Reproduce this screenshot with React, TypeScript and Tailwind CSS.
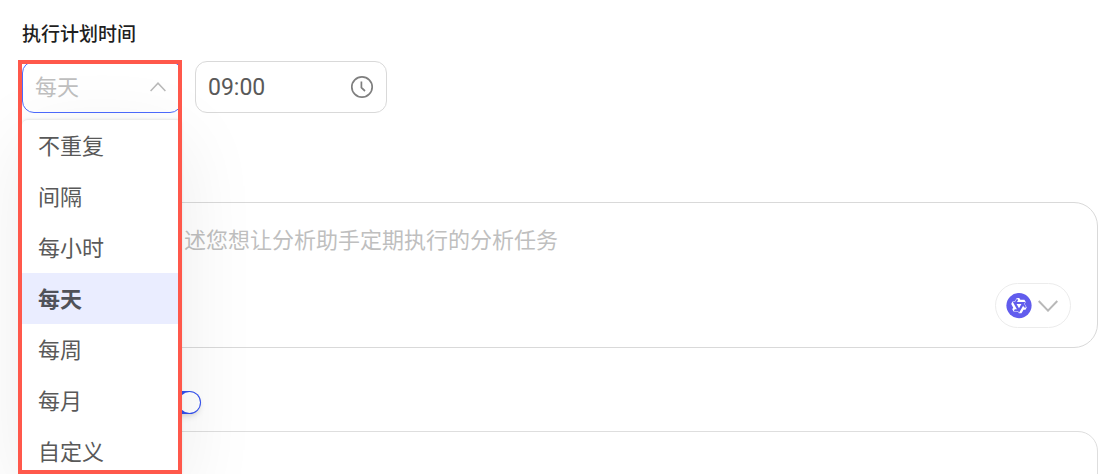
import { useState } from "react";

const repeatOptions = ["不重复", "间隔", "每小时", "每天", "每周", "每月", "自定义"];

function ClockIcon() {
  return (
    <svg className="size-6 shrink-0" viewBox="0 0 24 24" fill="none" stroke="#7f7f7f" strokeWidth="1.7" aria-hidden="true">
      <circle cx="12" cy="12" r="10.2" />
      <path d="M11.4 6.5v6.2l3.6 3.3" />
    </svg>
  );
}

function ModelIcon() {
  return (
    <svg className="size-[26px] shrink-0" viewBox="0 0 26 26" aria-hidden="true">
      <circle cx="13" cy="12.6" r="12.6" fill="#615ced" />
      <g transform="translate(4.6 4.2) scale(0.7)">
        <path
          fill="#fff"
          fillRule="evenodd"
          d="M12.604 1.34c.393.69.784 1.382 1.174 2.075a.18.18 0 00.157.091h5.552c.174 0 .322.11.446.327l1.454 2.57c.19.337.24.478.024.837-.26.43-.513.864-.76 1.3l-.367.658c-.106.196-.223.28-.04.512l2.652 4.637c.172.301.111.494-.043.77-.437.785-.882 1.564-1.335 2.34-.159.272-.352.375-.68.37-.777-.016-1.552-.01-2.327.016a.099.099 0 00-.081.05 575.097 575.097 0 01-2.705 4.74c-.169.293-.38.363-.725.364-.997.003-2.002.004-3.017.002a.537.537 0 01-.465-.271l-1.335-2.323a.09.09 0 00-.083-.049H4.982c-.285.03-.553-.001-.805-.092l-1.603-2.77a.543.543 0 01-.002-.54l1.207-2.12a.198.198 0 000-.197 550.951 550.951 0 01-1.875-3.272l-.79-1.395c-.16-.31-.173-.496.095-.965.465-.813.927-1.625 1.387-2.436.132-.234.304-.334.584-.335a338.3 338.3 0 012.589-.001.124.124 0 00.107-.063l2.806-4.895a.488.488 0 01.422-.246c.524-.001 1.053 0 1.583-.006L11.704 1c.341-.003.724.032.9.34zm-3.432.403a.06.06 0 00-.052.03L6.254 6.788a.157.157 0 01-.135.078H3.253c-.056 0-.07.025-.041.074l5.81 10.156c.025.042.013.062-.034.063l-2.795.015a.218.218 0 00-.2.116l-1.32 2.31c-.044.078-.021.118.068.118l5.716.008c.046 0 .08.02.104.061l1.403 2.454c.046.081.092.082.139 0l5.006-8.76.783-1.382a.055.055 0 01.096 0l1.424 2.53a.122.122 0 00.107.062l2.763-.02a.04.04 0 00.035-.02.041.041 0 000-.04l-2.9-5.086a.108.108 0 010-.113l.293-.507 1.12-1.977c.024-.041.012-.062-.035-.062H9.2c-.059 0-.073-.026-.043-.077l1.434-2.505a.107.107 0 000-.114L9.225 1.774a.06.06 0 00-.053-.031zm6.29 8.02c.046 0 .058.02.034.06l-.832 1.465-2.613 4.585a.056.056 0 01-.05.029.058.058 0 01-.05-.029L8.498 9.841c-.02-.034-.01-.052.028-.054l.216-.012 6.722-.012z"
        />
      </g>
    </svg>
  );
}

function RepeatSelect() {
  const [value, setValue] = useState("每天");
  return (
    <div className="relative w-40">
      <select
        id="repeat"
        aria-label="重复"
        value={value}
        onChange={(e) => setValue(e.target.value)}
        className="block h-[52px] w-full appearance-none rounded-xl border border-[#4d6bfe] bg-white pb-1 pl-3 pr-10 text-[22px] text-[#bfbfbf] outline-none"
      >
        {repeatOptions.map((o) => (
          <option key={o}>{o}</option>
        ))}
      </select>
      <svg
        className="pointer-events-none absolute right-4 top-[18px] z-20 size-4"
        viewBox="0 0 16 16"
        fill="none"
        stroke="#b8b8b8"
        strokeWidth="1.5"
        aria-hidden="true"
      >
        <path d="M0.6 12L8 4.2L15.4 12" />
      </svg>
      <ul
        role="listbox"
        aria-label="重复"
        className="absolute left-0 top-[58px] z-10 w-full rounded-md border-t border-[#ececec] bg-white shadow-[0_20px_80px_rgba(0,0,0,0.08),0_0_3px_rgba(0,0,0,0.08)]"
      >
        {repeatOptions.map((o) => (
          <li key={o} role="option" aria-selected={o === value}>
            <button
              type="button"
              onClick={() => setValue(o)}
              className={
                o === value
                  ? "block h-[51px] w-full bg-[#eaedff] pb-0.5 pl-4 text-left text-[22px] font-bold text-[#505259]"
                  : "block h-[51px] w-full pb-0.5 pl-4 text-left text-[22px] text-[#595959]"
              }
            >
              {o}
            </button>
          </li>
        ))}
      </ul>
      <div className="pointer-events-none absolute -left-1 -top-px z-30 h-[414px] w-[164px] border-4 border-[#ff584b]" />
    </div>
  );
}

export default function App() {
  const [enabled, setEnabled] = useState(true);
  return (
    <main className="h-screen overflow-hidden bg-white pl-[22px] pr-5 pt-[19px] font-['Noto_Sans_CJK_SC',sans-serif]">
      <h2 className="text-[19px] font-medium leading-7 text-[#1f1f1f]">执行计划时间</h2>

      <div className="mt-3.5 flex gap-[13px]">
        <RepeatSelect />
        <label className="flex h-[52px] w-48 items-center rounded-xl border border-[#d9d9d9] bg-white px-3">
          <input
            type="text"
            aria-label="时间"
            defaultValue="09:00"
            className="w-full min-w-0 flex-1 bg-transparent pt-0.5 font-[Roboto,sans-serif] text-[23px] text-[#595959] outline-none"
          />
          <ClockIcon />
        </label>
      </div>

      <div className="mt-[89px] flex h-[146px] flex-col rounded-3xl border border-[#d9d9d9] bg-white pb-[19px] pr-[26px] pt-[17px]">
        <textarea
          aria-label="任务描述"
          placeholder="述您想让分析助手定期执行的分析任务"
          className="w-full flex-1 resize-none bg-transparent pl-[161px] text-[22px] leading-9 outline-none placeholder:text-[#bfbfbf]"
        />
        <button
          type="button"
          aria-label="选择模型"
          className="flex h-[45px] w-[76px] shrink-0 items-center justify-between self-end rounded-full border border-[#ececec] pl-2.5 pr-3"
        >
          <ModelIcon />
          <svg className="h-3 w-5" viewBox="0 0 20 12" fill="none" stroke="#b8b8b8" strokeWidth="2" aria-hidden="true">
            <path d="M0.7 1L10 10.6L19.3 1" />
          </svg>
        </button>
      </div>

      <div className="mt-[43px] flex pl-[135px]">
        <label className="flex cursor-pointer">
          <input
            type="checkbox"
            role="switch"
            aria-label="启用"
            checked={enabled}
            onChange={(e) => setEnabled(e.target.checked)}
            className="peer sr-only"
          />
          <span className="flex h-[23px] w-11 rounded-full bg-gray-300 p-px shadow-md peer-checked:justify-end peer-checked:bg-[#3350f0]">
            <span className="size-[21px] rounded-full bg-white" />
          </span>
        </label>
      </div>

      <div className="mt-[17px] h-32 rounded-[20px] border border-[#dedede] bg-white" />
    </main>
  );
}
